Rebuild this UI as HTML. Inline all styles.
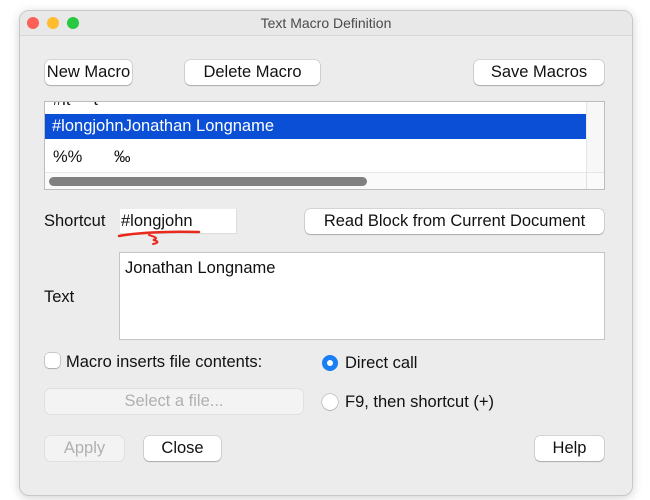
<!DOCTYPE html>
<html><head><style>
body{margin:0;width:650px;height:500px;background:#fff;font-family:"Liberation Sans",sans-serif;position:relative;overflow:hidden}
.win{position:absolute;left:19px;top:10px;width:612px;height:484px;background:#ececec;border:1px solid #c8c8c8;border-radius:10px;box-shadow:0 2px 10px rgba(0,0,0,.18);overflow:hidden}
.tb{position:absolute;left:0;top:0;width:100%;height:24px;border-bottom:1px solid #d8d8d8;background:#e8e8e8;text-align:center;font-size:14px;line-height:24px;color:#4a4a4a}
.dot{position:absolute;top:6px;width:12px;height:12px;border-radius:50%}
.ab{position:absolute;font-size:16.5px;color:#111}
.btn{position:absolute;background:#fff;border-radius:5px;box-shadow:0 0 0 .5px rgba(0,0,0,.2),0 1px 1px rgba(0,0,0,.2);text-align:center;font-size:16.5px;line-height:25px;height:25px;color:#111;white-space:nowrap}
.dis{background:#f3f3f3;color:#b0b0b0;box-shadow:0 0 0 .5px rgba(0,0,0,.1)}
</style></head><body>
<div class="win">
<div class="tb">Text Macro Definition</div>
<div class="dot" style="left:7px;background:#fe5f57"></div>
<div class="dot" style="left:27px;background:#febc2e"></div>
<div class="dot" style="left:47px;background:#28c840"></div>
</div>
<div class="btn" style="left:45px;top:60px;width:87px">New Macro</div>
<div class="btn" style="left:185px;top:60px;width:135px">Delete Macro</div>
<div class="btn" style="left:474px;top:60px;width:130px">Save Macros</div>

<div style="position:absolute;left:44px;top:101px;width:559px;height:87px;background:#fff;border:1px solid #bdbdbd;overflow:hidden">
<div class="ab" style="left:8px;top:-11px">#it&nbsp;&nbsp;&nbsp;&nbsp;&nbsp;t</div>
<div style="position:absolute;left:0;top:12px;width:541px;height:25px;background:#0a4fd6;color:#fff;font-size:16.5px;line-height:25px;padding-left:7px;box-sizing:border-box">#longjohnJonathan Longname</div>
<div class="ab" style="left:8px;top:46px">%%</div>
<div class="ab" style="left:69px;top:46px">‰</div>
<div style="position:absolute;left:541px;top:0;width:18px;height:70px;background:#f7f7f7;border-left:1px solid #e6e6e6"></div>
<div style="position:absolute;left:0;top:70px;width:559px;height:17px;background:#fafafa;border-top:1px solid #e6e6e6"></div>
<div style="position:absolute;left:541px;top:70px;width:1px;height:17px;background:#e0e0e0"></div>
<div style="position:absolute;left:4px;top:75px;width:318px;height:9px;border-radius:5px;background:#808080"></div>
</div>

<div class="ab" style="left:44px;top:212px">Shortcut</div>
<div style="position:absolute;left:120px;top:209px;width:116px;height:24px;background:#fff;border-right:1px solid #ddd;border-bottom:1px solid #ddd"></div>
<div class="ab" style="left:121px;top:212px">#longjohn</div>
<svg style="position:absolute;left:115px;top:226px" width="90" height="22"><path d="M4 10 C20 7,50 5,84 6" stroke="#e8291c" stroke-width="2.5" fill="none" stroke-linecap="round"/><path d="M34 9 C40 11,44 12,38 14 C44 15,44 17,38 18" stroke="#e8291c" stroke-width="2" fill="none" stroke-linecap="round"/></svg>
<div class="btn" style="left:305px;top:209px;width:299px">Read Block from Current Document</div>

<div class="ab" style="left:44px;top:288px">Text</div>
<div style="position:absolute;left:119px;top:252px;width:484px;height:86px;background:#fff;border:1px solid #c4c4c4"></div>
<div class="ab" style="left:125px;top:259px">Jonathan Longname</div>

<div style="position:absolute;left:45px;top:353px;width:15px;height:15px;background:#fff;border-radius:4px;box-shadow:0 0 0 .5px rgba(0,0,0,.3),0 1px 1px rgba(0,0,0,.15)"></div>
<div class="ab" style="left:66px;top:353px">Macro inserts file contents:</div>
<div style="position:absolute;left:322px;top:355px;width:16px;height:16px;border-radius:50%;background:#1a7ef5"></div>
<div style="position:absolute;left:327px;top:360px;width:6px;height:6px;border-radius:50%;background:#fff"></div>
<div class="ab" style="left:345px;top:354px">Direct call</div>
<div class="btn dis" style="left:45px;top:389px;width:258px">Select a file...</div>
<div style="position:absolute;left:322px;top:394px;width:16px;height:16px;border-radius:50%;background:#fff;box-shadow:0 0 0 .5px rgba(0,0,0,.3),0 1px 1px rgba(0,0,0,.1)"></div>
<div class="ab" style="left:345px;top:393px">F9, then shortcut (+)</div>

<div class="btn dis" style="left:45px;top:436px;width:79px">Apply</div>
<div class="btn" style="left:144px;top:436px;width:77px">Close</div>
<div class="btn" style="left:535px;top:436px;width:69px">Help</div>
</body></html>
